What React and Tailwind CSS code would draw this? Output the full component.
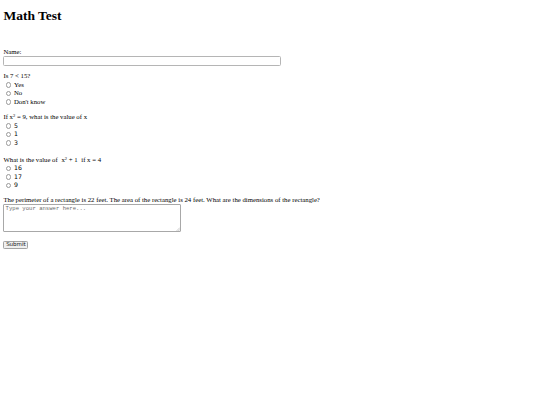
import React from 'react';

const serif = "font-['Liberation_Serif',serif]";
const sans = "font-['DejaVu_Sans',sans-serif]";

const questions = [
  {
    text: (
      <>Is 7 &lt; 15?</>
    ),
    options: ['Yes', 'No', "Don't know"],
    mathOpts: false,
    gap: 'mt-[6.5px]',
  },
  {
    text: (
      <>
        If x<sup className="text-[4.5px]">2</sup> = 9, what is the value of x
      </>
    ),
    options: ['5', '1', '3'],
    mathOpts: true,
    gap: 'mt-[7px]',
  },
  {
    text: (
      <>
        What is the value of{' '}
        <span className="mx-[2px]">
          x<sup className="text-[4.5px]">2</sup> + 1
        </span>{' '}
        if x = 4
      </>
    ),
    options: ['16', '17', '9'],
    mathOpts: true,
    gap: 'mt-[9px]',
  },
];

const Radio = ({ label, math }) => (
  <div className="flex items-center h-[8.45px]">
    <span className="ml-[2.2px] mr-[2.8px] w-[5.6px] h-[5.6px] rounded-full border-[0.7px] border-[#9a9a9a] bg-white" />
    <span className={math ? `${sans} text-[6.2px]` : ''}>{label}</span>
  </div>
);

export default function App() {
  return (
    <div className={`${serif} min-h-[405px] bg-white text-black text-[6.75px] leading-[8.45px] px-[3.4px]`}>
      <h1 className="pt-[7.5px] text-[13.5px] leading-[15.5px] font-bold">Math Test</h1>

      <form className="mt-[24.5px]">
        <div>Name:</div>
        <div className="h-[9.5px] w-[278px] mt-[0.5px] border-[1px] border-[#b5b5b5] rounded-[1.5px] bg-white" />

        {questions.map((q, i) => (
          <div key={i} className={q.gap}>
            <div>{q.text}</div>
            {q.options.map((o) => (
              <Radio key={o} label={o} math={q.mathOpts} />
            ))}
          </div>
        ))}

        <div className="mt-[6px]">
          <div>
            The perimeter of a rectangle is 22 feet. The area of the rectangle is 24 feet. What are the
            dimensions of the rectangle?
          </div>
          <div className="relative h-[28px] w-[178px] border-[1px] border-[#a8a8a8] rounded-[1px] bg-white">
            <span className="absolute left-[1.2px] top-[0.6px] font-['Liberation_Mono',monospace] text-[5.6px] leading-[6.5px] text-[#6b6b6b]">
              Type your answer here...
            </span>
            <svg className="absolute right-[0.5px] bottom-[0.5px]" width="4" height="4" viewBox="0 0 4 4">
              <path d="M4 0.5 L0.5 4 M4 2.3 L2.3 4" stroke="#999" strokeWidth="0.5" />
            </svg>
          </div>
        </div>

        <button
          type="button"
          className={`${sans} mt-[8.5px] h-[8.5px] w-[25px] flex items-center justify-center text-[5.5px] leading-none text-[#111] bg-[#efefef] border-[0.8px] border-[#a3a3a3] rounded-[1.3px]`}
        >
          Submit
        </button>
      </form>
    </div>
  );
}
